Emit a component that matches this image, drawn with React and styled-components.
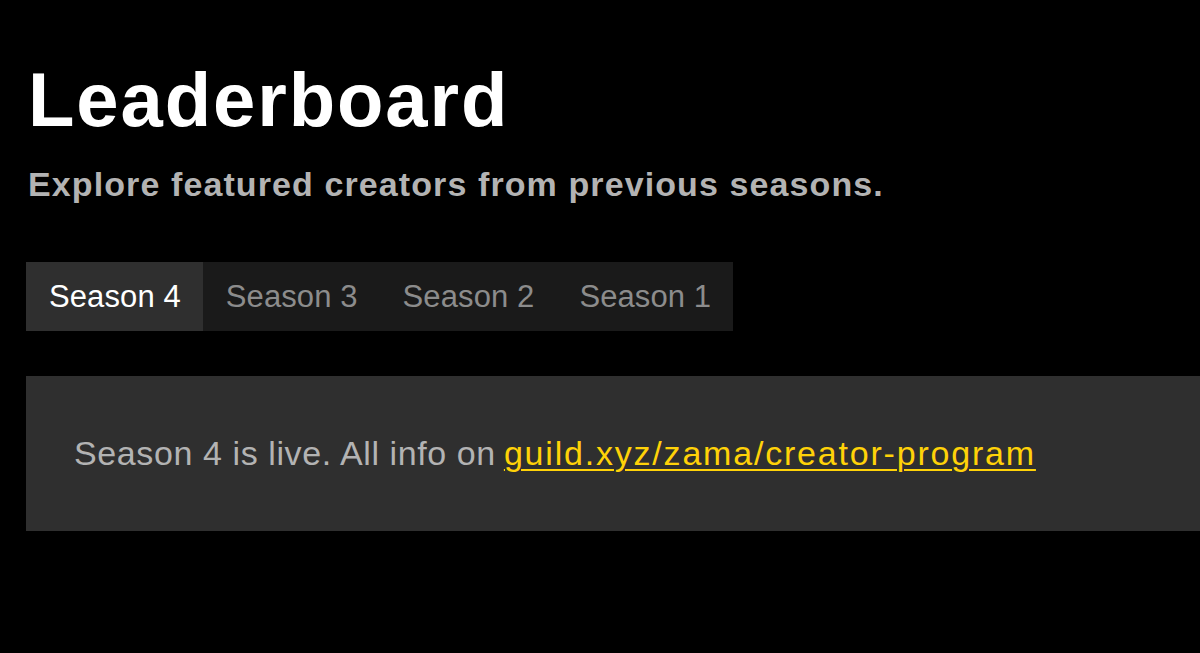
import React, { useState } from 'react';
import styled, { createGlobalStyle } from 'styled-components';

const GlobalStyle = createGlobalStyle`
  html, body {
    margin: 0;
    padding: 0;
    background: #000;
    overflow: hidden;
  }
  body {
    font-family: "Liberation Sans", Arial, sans-serif;
    color: #fff;
  }
`;

const Page = styled.main`
  padding: 50px 0 0 26px;
  min-height: 653px;
  box-sizing: border-box;
`;

const Title = styled.h1`
  margin: 0 0 0 2px;
  font-size: 76px;
  line-height: 100px;
  font-weight: 700;
  letter-spacing: 1.9px;
  color: #fff;
`;

const Subtitle = styled.p`
  margin: 14px 0 0 2px;
  font-size: 34px;
  line-height: 40px;
  font-weight: 700;
  letter-spacing: 1.1px;
  color: #b3b3b3;
`;

const Tabs = styled.div`
  display: inline-flex;
  margin-top: 58px;
  background: #1a1a1a;
  height: 69px;
`;

const Tab = styled.button`
  border: 0;
  margin: 0;
  padding: 0 22px 0 23px;
  height: 100%;
  background: ${p => (p.active ? '#2f2f2f' : 'transparent')};
  color: ${p => (p.active ? '#fff' : '#8c8c8c')};
  font-family: "Liberation Sans", Arial, sans-serif;
  font-size: 31px;
  letter-spacing: 0.1px;
  cursor: pointer;
`;

const Banner = styled.div`
  display: flex;
  align-items: center;
  margin-top: 45px;
  width: 1200px;
  height: 155px;
  padding-left: 48px;
  box-sizing: border-box;
  background: #2f2f2f;
  font-size: 34px;
  color: #b3b3b3;
  letter-spacing: 0.6px;
`;

const BannerLink = styled.a`
  margin-left: 8px;
  color: #ffd208;
  text-decoration: underline;
  text-underline-offset: 4px;
  text-decoration-thickness: 2px;
  letter-spacing: 1.8px;
`;

const seasons = ['Season 4', 'Season 3', 'Season 2', 'Season 1'];

export default function App() {
  const [current, setCurrent] = useState('Season 4');
  return (
    <>
      <GlobalStyle />
      <Page>
        <Title>Leaderboard</Title>
        <Subtitle>Explore featured creators from previous seasons.</Subtitle>
        <Tabs>
          {seasons.map(s => (
            <Tab key={s} active={current === s} onClick={() => setCurrent(s)}>
              {s}
            </Tab>
          ))}
        </Tabs>
        <Banner>
          Season 4 is live. All info on
          <BannerLink href="#">guild.xyz/zama/creator-program</BannerLink>
        </Banner>
      </Page>
    </>
  );
}
